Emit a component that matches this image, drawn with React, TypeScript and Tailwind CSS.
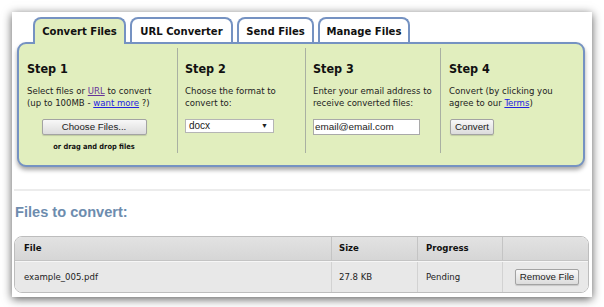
import React from "react";

const tabs = [
  { label: "Convert Files", w: "w-[93px]", active: true },
  { label: "URL Converter", w: "w-[103px]", active: false },
  { label: "Send Files", w: "w-[77px]", active: false },
  { label: "Manage Files", w: "w-[92px]", active: false },
];

function Btn({ children, className = "" }: { children: React.ReactNode; className?: string }) {
  return (
    <div
      className={
        "flex h-[16px] items-center justify-center rounded-[2px] border border-[#a3a3a3] bg-gradient-to-b from-[#f8f8f8] to-[#dcdcdc] font-['Liberation_Sans',sans-serif] text-[9.7px] text-[#222] shadow-[0_1px_1px_rgba(0,0,0,0.15)] " +
        className
      }
    >
      {children}
    </div>
  );
}

export default function App() {
  return (
    <div className="h-[307px] w-[604px] overflow-hidden bg-white pl-[12px] pt-[12px]">
      <div className="h-[285px] w-[580px] bg-white font-['DejaVu_Sans_Condensed','Liberation_Sans',sans-serif] text-[#222] shadow-[0_2px_9px_rgba(0,0,0,0.65)]">
        {/* tabs */}
        <div className="relative z-10 flex items-end gap-[4px] pl-[21px] pt-[5px]">
          {tabs.map((t) => (
            <div
              key={t.label}
              className={
                t.active
                  ? "-mb-[2px] flex h-[27px] items-center justify-center rounded-t-[8px] border-2 border-b-0 border-[#7592c2] bg-[#e1eebe] pt-[2px] text-[11.2px] font-bold text-[#111] " + t.w
                  : "flex h-[25px] items-center justify-center rounded-t-[8px] border-2 border-b-0 border-[#7592c2] bg-white pt-[3px] text-[11.2px] font-bold text-[#111] " + t.w
              }
            >
              {t.label}
            </div>
          ))}
        </div>

        {/* green panel */}
        <div className="ml-[5px] h-[125px] w-[568px] rounded-[9px] border-2 border-[#7592c2] bg-[#e1eebe] shadow-[0_3px_4px_rgba(0,0,0,0.35)]">
          <div className="mt-[4px] flex h-[105px] text-[9.5px] leading-[12px]">
            <div className="w-[158px] pl-[8px] pr-[16px] pt-[13px]">
              <div className="text-[12.5px] font-bold leading-[16px] text-[#111]">Step 1</div>
              <div className="mt-[8px]">
                Select files or <span className="text-[#663399] underline">URL</span> to convert
                <br />
                (up to 100MB - <span className="text-[#2323e0] underline">want more</span> ?)
              </div>
              <Btn className="mx-auto mt-[10px] w-[105px]">Choose Files...</Btn>
              <div className="mt-[6px] text-center text-[7.4px] font-bold leading-[12px] text-[#111]">
                or drag and drop files
              </div>
            </div>

            <div className="w-[128px] border-l border-[#a9b0a2] pl-[7px] pt-[13px]">
              <div className="text-[12.5px] font-bold leading-[16px] text-[#111]">Step 2</div>
              <div className="mt-[8px]">
                Choose the format to
                <br />
                convert to:
              </div>
              <div className="mt-[10px] flex h-[14px] w-[89px] items-center justify-between border border-[#b5b5b5] bg-white pl-[3px] pr-[5px] font-['Liberation_Sans',sans-serif] text-[10px] text-[#222]">
                <span>docx</span>
                <span className="text-[7px]">▼</span>
              </div>
            </div>

            <div className="w-[135px] border-l border-[#a9b0a2] pl-[7px] pt-[13px]">
              <div className="text-[12.5px] font-bold leading-[16px] text-[#111]">Step 3</div>
              <div className="mt-[8px]">
                Enter your email address to
                <br />
                receive converted files:
              </div>
              <div className="mt-[10px] flex h-[16px] w-[107px] items-center border border-[#a9a9a9] bg-white pl-[1px] font-['Liberation_Sans',sans-serif] text-[9.9px] text-[#222]">
                email@email.com
              </div>
            </div>

            <div className="flex-1 border-l border-[#a9b0a2] pl-[8px] pt-[13px]">
              <div className="text-[12.5px] font-bold leading-[16px] text-[#111]">Step 4</div>
              <div className="mt-[8px]">
                Convert (by clicking you
                <br />
                agree to our <span className="text-[#2323e0] underline">Terms</span>)
              </div>
              <Btn className="ml-[1px] mt-[10px] w-[44px]">Convert</Btn>
            </div>
          </div>
        </div>

        {/* separator */}
        <div className="ml-[2px] mt-[22px] h-[2px] w-[576px] bg-[#ececec]" />

        <div className="ml-[3px] mt-[12px] font-['Liberation_Sans',sans-serif] text-[14.6px] font-bold leading-[18px] text-[#6d8cae]">
          Files to convert:
        </div>

        {/* table */}
        <div className="ml-[2px] mt-[15px] w-[575px] overflow-hidden rounded-[8px] border border-[#bdbdbd] text-[9.5px]">
          <div className="flex h-[24px] items-center border-b border-[#c4c4c4] bg-gradient-to-b from-[#e2e2e2] to-[#d6d6d6] font-bold text-[#111]">
            <div className="flex h-full w-[316px] items-center pl-[9px]">File</div>
            <div className="flex h-full w-[86px] items-center border-l border-[#c4c4c4] pl-[7px]">Size</div>
            <div className="flex h-full w-[85px] items-center border-l border-[#c4c4c4] pl-[8px]">Progress</div>
            <div className="h-full flex-1 border-l border-[#c4c4c4]" />
          </div>
          <div className="flex h-[31px] items-center border-t border-white/60 bg-[#e8e8e8]">
            <div className="flex h-full w-[316px] items-center pl-[9px]">example_005.pdf</div>
            <div className="flex h-full w-[86px] items-center border-l border-[#d2d2d2] pl-[7px]">27.8 KB</div>
            <div className="flex h-full w-[85px] items-center border-l border-[#d2d2d2] pl-[8px]">Pending</div>
            <div className="flex h-full flex-1 items-center border-l border-[#d2d2d2] pl-[12px]">
              <Btn className="w-[64px]">Remove File</Btn>
            </div>
          </div>
        </div>
      </div>
    </div>
  );
}
